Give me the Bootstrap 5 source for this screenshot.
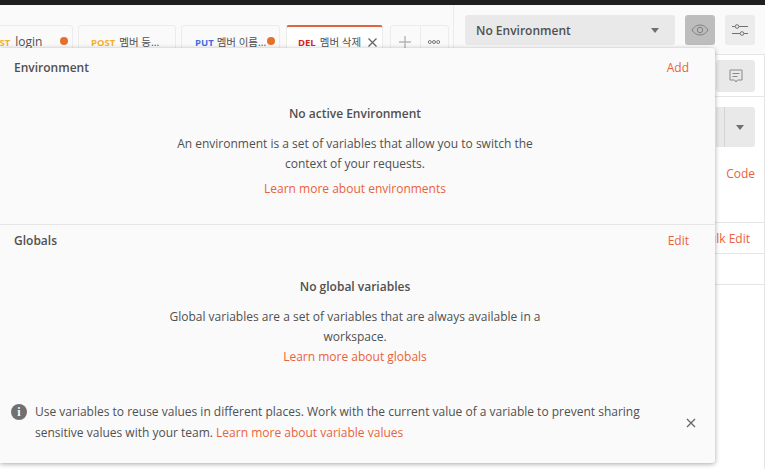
<!DOCTYPE html>
<html lang="en">
<head>
<meta charset="utf-8">
<title>Environment</title>
<link href="https://cdn.jsdelivr.net/npm/bootstrap@5.3.0/dist/css/bootstrap.min.css" rel="stylesheet">
<style>
html,body{height:469px;overflow:hidden}
body{background:#fff;font-family:"Open Sans","Noto Sans CJK KR",sans-serif;font-size:12px;line-height:20px;color:#505050}
.stage{height:469px;position:relative;overflow:hidden}
.topline{height:5px;background:#1f1f1f}
.headbar{height:50px;background:#fafafa;border-bottom:1px solid #e6e6e6}
.tabzone{width:454px;height:50px;border-right:1px solid #ececec;padding:20px 4px 0 0;overflow:hidden}
.tabitem{flex:none;width:99px;height:40px;margin-right:5px;background:#fafafa;border:1px solid #ececec;border-radius:3px 3px 0 0;padding-top:6px;white-space:nowrap;font-size:10.5px;position:relative}
.tabfirst{width:120px;padding-left:32px;font-size:12px}
.tabfirst .verb{margin-right:5px}
.tabsecond{width:98px;padding-left:12px}
.tabthird{padding-left:13px;margin-right:6px}
.tabthird .verb{margin-right:3px}
.tabactive{width:97px;background:#fff;border-top:2px solid #e0633a;padding-top:5px;padding-left:11px}
.verb{font-size:9.5px;font-weight:700;margin-right:4px}
.vpost{color:#f4b02d}.vput{color:#3f6ee8}.vdel{color:#d3241c}
.dot{position:absolute;top:11px;right:4px;width:8px;height:8px;border-radius:50%;background:#e5702c}
.closetab{margin-left:7px;vertical-align:-1px}
.addgroup{flex:none;width:59px;height:40px;margin-left:2px;border:1px solid #ececec;border-radius:3px 3px 0 0}
.addgroup>div{width:50%;height:100%;padding-top:5px;text-align:center}
.addgroup>div+div{border-left:1px solid #ececec}
.envzone{padding:10px 10px 0 11px;gap:10px}
.envselect{width:210px;height:30px;background:#e9e9e9;border-radius:3px;padding:1px 12px 0 11px;font-weight:600;color:#505050}
.caret-down{width:0;height:0;border-left:4px solid transparent;border-right:4px solid transparent;border-top:5px solid #707070}
.iconbox{width:30px;height:30px;background:#ececec;border-radius:3px}
.iconon{background:#bdbdbd}
.backpanel{height:414px;border-right:1px solid #e6e6e6;padding-top:5px}
.msgbox{width:39px;height:32px;background:#e9e9e9;border-radius:3px;margin-right:9px}
.sendrow{height:1px;background:#e6e6e6;margin:4px 0 10px}
.sendbtn{width:39px;height:40px;background:#e9e9e9;border-radius:0 3px 3px 0;margin-right:9px;padding-left:8px}
.sendbtn>div{border-left:1px solid #d4d4d4;height:100%;width:31px}
.backlink{color:#e8633a;line-height:20px}
.codelink{margin:17px 9px 0 0}
.bulkrow{margin-top:38px;height:32px;border-top:1px solid #e6e6e6;border-bottom:1px solid #e6e6e6;padding:6px 14px 0 0}
.emptyrow{height:31px;border-bottom:1px solid #e6e6e6}
.popbox{position:absolute;left:0;top:48px;width:715px;height:415px;background:#fafafa;border-radius:0 3px 3px 0;box-shadow:0 1px 5px rgba(0,0,0,.35)}
.popsection{padding:10px 26px 0 14px}
.envblock{height:177px;border-bottom:1px solid #e6e6e6}
.globblock{height:176px;padding-top:6px}
.pophead{font-weight:600;color:#505050}
.orange{color:#e8633a;text-decoration:none}
.midcol{width:380px;margin:26px 0 0 151px;text-align:center}
.midcol .ttl{font-weight:600;margin-bottom:10px}
.midcol .learn{margin-top:5px}
.globblock .learn{margin-top:0}
.infobar{padding:0 19px 0 11px}
.infotext{width:640px;margin-left:8px;line-height:21px;color:#505050;font-size:12px}
.infomark{flex:none;width:16px;height:16px;border-radius:50%;background:#707070;margin-top:3px;color:#fafafa;font:700 12px/16px "Liberation Serif",serif;text-align:center}
.closex{margin-left:auto;margin-top:17px}
</style>
</head>
<body>
<div class="stage">
  <div class="topline"></div>
  <div class="headbar d-flex">
    <div class="tabzone d-flex justify-content-end">
      <div class="tabitem tabfirst"><span class="verb vpost">POST</span>login<span class="dot"></span></div>
      <div class="tabitem tabsecond"><span class="verb vpost">POST</span>멤버 등...</div>
      <div class="tabitem tabthird"><span class="verb vput">PUT</span>멤버 이름...<span class="dot"></span></div>
      <div class="tabitem tabactive"><span class="verb vdel">DEL</span>멤버 삭제<svg class="closetab" width="9" height="9" viewBox="0 0 9 9"><path d="M.5.5l8 8M8.500.5l-8 8" stroke="#666" stroke-width="1.300" fill="none"/></svg></div>
      <div class="addgroup d-flex">
        <div><svg width="14" height="14" viewBox="0 0 14 14"><path d="M7 1v12M1 7h12" stroke="#b5b5b5" stroke-width="1.400"/></svg></div>
        <div><svg width="14" height="14" viewBox="0 0 14 14"><circle cx="2.800" cy="7" r="1.500" fill="none" stroke="#777"/><circle cx="7" cy="7" r="1.500" fill="none" stroke="#777"/><circle cx="11.200" cy="7" r="1.500" fill="none" stroke="#777"/></svg></div>
      </div>
    </div>
    <div class="envzone d-flex flex-grow-1">
      <div class="envselect d-flex align-items-center justify-content-between"><span>No Environment</span><span class="caret-down me-1"></span></div>
      <div class="iconbox iconon d-flex align-items-center justify-content-center">
        <svg width="18" height="12" viewBox="0 0 18 12"><path d="M1 6c2-3.300 4.800-5 8-5s6 1.700 8 5c-2 3.300-4.800 5-8 5S3 9.300 1 6z" fill="none" stroke="#808080"/><circle cx="9" cy="6" r="2.700" fill="none" stroke="#808080"/></svg>
      </div>
      <div class="iconbox d-flex align-items-center justify-content-center">
        <svg width="16" height="12" viewBox="0 0 16 12"><path d="M0 2.500h3M7 2.500h9M0 9.500h8M12 9.500h4" stroke="#707070"/><circle cx="5" cy="2.500" r="1.800" fill="none" stroke="#707070"/><circle cx="10" cy="9.500" r="1.800" fill="none" stroke="#707070"/></svg>
      </div>
    </div>
  </div>
  <div class="backpanel d-flex flex-column align-items-end">
    <div class="msgbox d-flex align-items-center justify-content-center">
      <svg width="14" height="14" viewBox="0 0 14 14"><path d="M1 1h12v10H8.500L7 13l-1.500-2H1z M3.500 4.500h7M3.500 7.500h5" fill="none" stroke="#8a8a8a"/></svg>
    </div>
    <div class="sendrow w-100"></div>
    <div class="sendbtn"><div class="d-flex align-items-center justify-content-center"><span class="caret-down"></span></div></div>
    <div class="backlink codelink">Code</div>
    <div class="bulkrow w-100 text-end backlink">Bulk Edit</div>
    <div class="emptyrow w-100"></div>
  </div>
  <div class="popbox">
    <div class="popsection envblock">
      <div class="d-flex justify-content-between"><span class="pophead">Environment</span><a class="orange" href="#">Add</a></div>
      <div class="midcol">
        <div class="ttl">No active Environment</div>
        <div>An environment is a set of variables that allow you to switch the context of your requests.</div>
        <div class="learn"><a class="orange" href="#">Learn more about environments</a></div>
      </div>
    </div>
    <div class="popsection globblock">
      <div class="d-flex justify-content-between"><span class="pophead">Globals</span><a class="orange" href="#">Edit</a></div>
      <div class="midcol">
        <div class="ttl">No global variables</div>
        <div>Global variables are a set of variables that are always available in a workspace.</div>
        <div class="learn"><a class="orange" href="#">Learn more about globals</a></div>
      </div>
    </div>
    <div class="infobar d-flex">
      <div class="infomark">i</div>
      <div class="infotext">Use variables to reuse values in different places. Work with the current value of a variable to prevent sharing sensitive values with your team. <a class="orange" href="#">Learn more about variable values</a></div>
      <div class="closex"><svg class="d-block" width="10" height="10" viewBox="0 0 10 10"><path d="M1 1l8 8M9 1l-8 8" stroke="#666" stroke-width="1.300" fill="none"/></svg></div>
    </div>
  </div>
</div>
</body>
</html>
